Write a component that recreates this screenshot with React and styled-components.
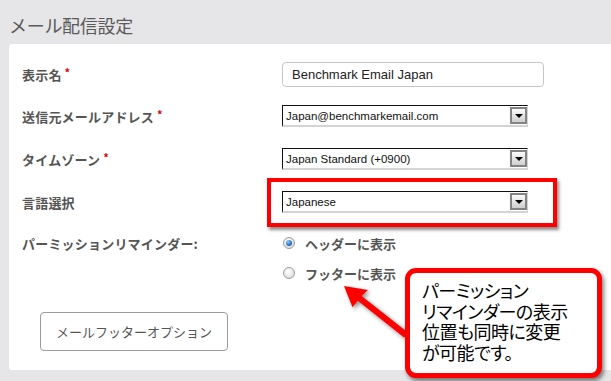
import React from 'react'
import styled, { createGlobalStyle } from 'styled-components'

const GlobalStyle = createGlobalStyle`
  html, body {
    margin: 0;
    padding: 0;
    background: #e6e6e8;
  }
  body {
    font-family: "Noto Sans CJK JP", "Liberation Sans", sans-serif;
  }
`

const Page = styled.div`
  width: 611px;
  height: 381px;
  overflow: hidden;
  background: #e6e6e8;
  padding-left: 9px;
  box-sizing: border-box;
`

const Title = styled.h1`
  margin: 0;
  height: 44px;
  line-height: 50px;
  font-size: 18px;
  font-weight: 400;
  color: #5a5a5a;
  letter-spacing: -0.3px;
`

const Card = styled.div`
  position: relative;
  width: 620px;
  height: 326px;
  box-sizing: border-box;
  background: #fff;
  border-radius: 3px;
  padding: 18px 0 0 13px;
`

const Row = styled.div`
  display: flex;
  align-items: center;
  height: ${p => p.h}px;
  margin-bottom: ${p => p.gap}px;
`

const Label = styled.div`
  width: 260px;
  flex: none;
  font-size: 13px;
  font-weight: 700;
  color: #555;
  letter-spacing: 0.2px;
`

const Req = styled.span`
  color: #d00;
  font-size: 11px;
  margin-left: 3px;
  position: relative;
  top: -3px;
`

const TextInput = styled.div`
  width: 262px;
  height: 25px;
  box-sizing: border-box;
  border: 1px solid #c6c6c6;
  border-radius: 4px;
  padding-left: 9px;
  display: flex;
  align-items: center;
  font-family: "Liberation Sans", Arial, sans-serif;
  font-size: 13px;
  color: #222;
`

const Select = styled.div`
  width: 246px;
  height: 22px;
  box-sizing: border-box;
  border-top: 1px solid #111;
  border-left: 1px solid #111;
  border-right: 1px solid #d4d4d4;
  border-bottom: 2px solid #d4d4d4;
  display: flex;
  align-items: center;
  justify-content: space-between;
  padding-left: 3px;
  font-family: "Liberation Sans", Arial, sans-serif;
  font-size: 11.5px;
  color: #111;
`

const DropButton = styled.span`
  width: 17px;
  height: 17px;
  box-sizing: border-box;
  border: 2px solid #848484;
  background: linear-gradient(#fbfbfb, #cfcfcf);
  display: flex;
  align-items: center;
  justify-content: center;
  &::after {
    content: "";
    width: 0;
    height: 0;
    border-left: 4px solid transparent;
    border-right: 4px solid transparent;
    border-top: 4px solid #000;
    margin-top: 1px;
  }
`

const RadioRow = styled.div`
  display: flex;
  align-items: center;
  gap: 10px;
  font-size: 13px;
  font-weight: 700;
  color: #555;
`

const Radio = styled.span`
  width: 12px;
  height: 12px;
  box-sizing: border-box;
  border-radius: 50%;
  border: 1px solid #9a9a9a;
  background: radial-gradient(circle at 40% 35%, #fff, #d6d6d6);
  display: flex;
  align-items: center;
  justify-content: center;
  margin-left: 1px;
  &::after {
    content: "";
    width: 6px;
    height: 6px;
    border-radius: 50%;
    display: ${p => (p.checked ? 'block' : 'none')};
    background: radial-gradient(circle at 35% 30%, #8fd0ff, #1a5fb8 70%, #0d3f86);
  }
`

const FooterButton = styled.div`
  width: 188px;
  height: 39px;
  box-sizing: border-box;
  margin: 29px 0 0 18px;
  border: 1px solid #9c9c9c;
  border-radius: 4px;
  display: flex;
  align-items: center;
  justify-content: center;
  font-size: 13px;
  color: #555;
`

const Highlight = styled.div`
  position: absolute;
  left: 258px;
  top: 134px;
  width: 290px;
  height: 49px;
  box-sizing: border-box;
  border: 4px solid #f00;
  box-shadow: 2px 3px 3px rgba(0, 0, 0, 0.45);
  pointer-events: none;
`

const Callout = styled.div`
  position: absolute;
  left: 396px;
  top: 224px;
  width: 197px;
  height: 110px;
  box-sizing: border-box;
  border: 5px solid #f00;
  border-radius: 11px;
  background: #fff;
  box-shadow: 2px 3px 4px rgba(0, 0, 0, 0.5);
  padding: 7px 0 0 12px;
  font-size: 18px;
  line-height: 20.5px;
  color: #000;
  letter-spacing: -0.5px;
  font-feature-settings: "palt";
`

const ArrowSvg = styled.svg`
  position: absolute;
  left: 330px;
  top: 235px;
  overflow: visible;
  filter: drop-shadow(2px 2px 2px rgba(0, 0, 0, 0.45));
`

const Arrow = () => (
  <ArrowSvg width="80" height="70" viewBox="0 0 80 70">
    <polygon
      points="5,7 13.5,28.2 18.8,21.8 65.1,58.4 68.9,53.6 22.6,17 28.9,11.1"
      fill="#f00"
    />
  </ArrowSvg>
)

const fields = [
  { label: '送信元メールアドレス', value: 'Japan@benchmarkemail.com', required: true },
  { label: 'タイムゾーン', value: 'Japan Standard (+0900)', required: true },
  { label: '言語選択', value: 'Japanese' },
]

const App = () => (
  <>
    <GlobalStyle />
    <Page>
      <Title>メール配信設定</Title>
      <Card>
        <Row h={25} gap={18}>
          <Label>表示名<Req>*</Req></Label>
          <TextInput>Benchmark Email Japan</TextInput>
        </Row>
        {fields.map((f, i) => (
          <Row key={f.label} h={22} gap={i < 2 ? 21 : 20}>
            <Label>
              {f.label}
              {f.required && <Req>*</Req>}
            </Label>
            <Select>
              <span>{f.value}</span>
              <DropButton />
            </Select>
          </Row>
        ))}
        <Row h={20} gap={10}>
          <Label>パーミッションリマインダー:</Label>
          <RadioRow>
            <Radio checked />
            ヘッダーに表示
          </RadioRow>
        </Row>
        <Row h={20} gap={0}>
          <Label />
          <RadioRow>
            <Radio />
            フッターに表示
          </RadioRow>
        </Row>
        <FooterButton>メールフッターオプション</FooterButton>

        <Highlight />
        <Arrow />
        <Callout>
          パーミッション<br />
          リマインダーの表示<br />
          位置も同時に変更<br />
          が可能です。
        </Callout>
      </Card>
    </Page>
  </>
)

export default App
